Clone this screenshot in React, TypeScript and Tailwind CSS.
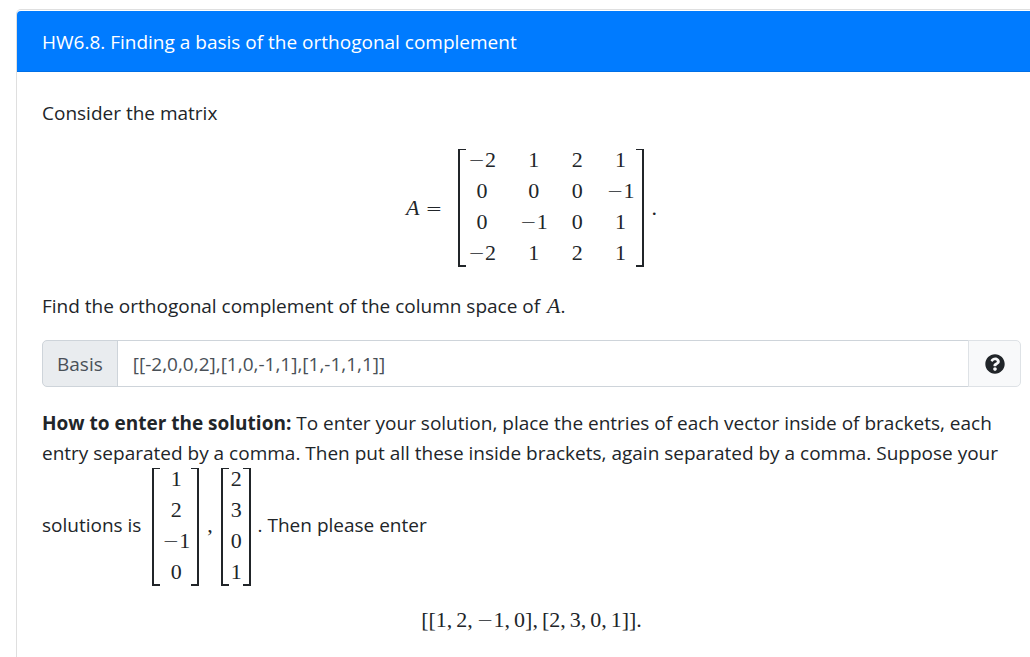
import { useState } from "react";
import type { ReactNode } from "react";
import { FaQuestionCircle } from "react-icons/fa";

// ─── Math ─────────────────────────────────────────────────────────────────────
function MathText({ children }: { children: ReactNode }) {
  return (
    <span className="font-['Liberation_Serif',serif] text-[22px] leading-5 whitespace-nowrap">
      {children}
    </span>
  );
}

// wide, thin operator signs
function Sign({ children }: { children: ReactNode }) {
  return (
    <span className="font-['DejaVu_Sans',sans-serif] text-[20px] leading-none font-extralight">
      {children}
    </span>
  );
}

function Num({ value }: { value: number }) {
  return (
    <>
      {value < 0 && <Sign>−</Sign>}
      {Math.abs(value)}
    </>
  );
}

const columnClasses: Record<number, string> = {
  1: "grid-cols-[auto]",
  4: "grid-cols-[repeat(4,auto)]",
};

function Matrix({ rows }: { rows: number[][] }) {
  return (
    <span className="inline-flex align-middle font-['Liberation_Serif',serif] text-[22px] leading-5">
      <span className="w-2 border-t border-b-2 border-l-2 border-[#212529]" />
      <span
        className={`grid ${columnClasses[rows[0].length]} auto-rows-[20px] gap-x-6 gap-y-[11px] pt-px pr-px pb-1 pl-0.5 text-center whitespace-nowrap`}
      >
        {rows.flatMap((row, i) =>
          row.map((value, j) => (
            <span key={`${i}-${j}`}>
              <Num value={value} />
            </span>
          ))
        )}
      </span>
      <span className="w-2 border-t border-r-2 border-b-2 border-[#212529]" />
    </span>
  );
}

// comma separated numbers in brackets
function VectorText({ values }: { values: number[] }) {
  return (
    <>
      [
      {values.map((value, i) => (
        <span key={i} className={i < values.length - 1 ? "mr-1" : ""}>
          <Num value={value} />
          {i < values.length - 1 && ","}
        </span>
      ))}
      ]
    </>
  );
}

const matrixA = [
  [-2, 1, 2, 1],
  [0, 0, 0, -1],
  [0, -1, 0, 1],
  [-2, 1, 2, 1],
];

// ─── Answer field ─────────────────────────────────────────────────────────────
function BasisInput() {
  const [value, setValue] = useState("[[-2,0,0,2],[1,0,-1,1],[1,-1,1,1]]");

  return (
    <div className="flex h-[47px]">
      <label
        htmlFor="basis"
        className="flex items-center rounded-l-[5px] border border-[#ced4da] bg-[#e9ecef] px-[14px] text-[#495057]"
      >
        Basis
      </label>
      <input
        id="basis"
        type="text"
        value={value}
        onChange={(e) => setValue(e.target.value)}
        className="-ml-px min-w-0 flex-1 border border-[#ced4da] bg-white px-[15px] text-[#495057] outline-none"
      />
      <button
        type="button"
        aria-label="Help"
        className="-ml-px flex w-[53px] items-center justify-center rounded-r-[5px] border border-[#dee2e6] bg-[#f8f9fa] text-[#212529]"
      >
        <FaQuestionCircle className="size-5" />
      </button>
    </div>
  );
}

export default function App() {
  return (
    <main className="flex min-h-screen flex-col overflow-hidden bg-white pt-[9px] pl-4 font-['Open_Sans',sans-serif] text-[19px] leading-[30px] text-[#212529]">
      <section className="-mr-4 flex-1 rounded-t-[5px] border border-b-0 border-[#dfdfdf] pt-px">
        <h1 className="rounded-t-[4px] border-b border-[#006fe6] bg-[#007bff] px-[25px] pt-4 pb-[14px] text-white">
          HW6.8. Finding a basis of the orthogonal complement
        </h1>

        <div className="pt-[26px] pr-6 pl-[25px]">
          <p>Consider the matrix</p>

          <div className="mt-[21px] flex items-center justify-center">
            <span className="flex items-center gap-[6px]">
              <MathText>
                <i>A</i>
              </MathText>
              <Sign>=</Sign>
            </span>
            <span className="ml-4">
              <Matrix rows={matrixA} />
            </span>
            <span className="ml-2">
              <MathText>.</MathText>
            </span>
          </div>

          <p className="mt-6">
            Find the orthogonal complement of the column space of{" "}
            <span className="ml-0.5">
              <MathText>
                <i>A</i>
              </MathText>
            </span>
            .
          </p>

          <div className="mt-[19px]">
            <BasisInput />
          </div>

          <p className="mt-[21px]">
            <strong className="font-bold">How to enter the solution:</strong> To enter your solution, place the
            entries of each vector inside of brackets, each entry separated by a comma. Then put all these inside
            brackets, again separated by a comma. Suppose your solutions is{" "}
            <span className="ml-1.5 whitespace-nowrap">
              <Matrix rows={[[1], [2], [-1], [0]]} />
              <span className="mx-2">
                <MathText>,</MathText>
              </span>
              <Matrix rows={[[2], [3], [0], [1]]} />
            </span>
            <span className="ml-0.5"> . Then please enter</span>
          </p>

          <p className="mt-[19px] text-center">
            <MathText>
              [<VectorText values={[1, 2, -1, 0]} />
              <span className="mr-1">,</span>
              <VectorText values={[2, 3, 0, 1]} />
              ].
            </MathText>
          </p>
        </div>
      </section>
    </main>
  );
}
